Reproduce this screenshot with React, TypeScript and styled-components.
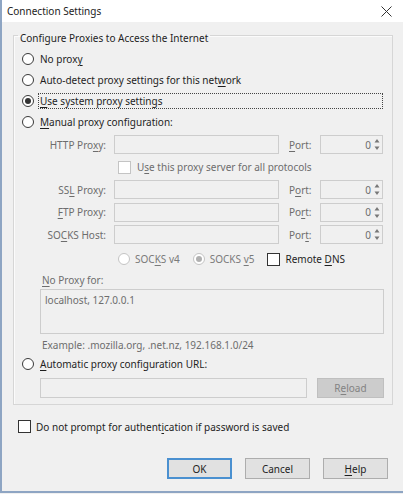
import styled, { createGlobalStyle } from 'styled-components';

const GlobalStyle = createGlobalStyle`
  html, body { margin: 0; padding: 0; background: #f0f0f0; }
  body {
    font-family: "Noto Sans", "Open Sans", sans-serif;
    font-size: 10px;
    color: #1e1e1e;
    white-space: nowrap;
  }
  u { text-decoration-thickness: 1px; text-underline-offset: 2px; }
`;

const Window = styled.div`
  width: 403px;
  height: 493px;
  box-sizing: border-box;
  display: flex;
  flex-direction: column;
  background: #f0f0f0;
  border-left: 2px solid #8ea5c3;
  border-bottom: 2px solid #8ea5c3;
`;

const TitleBar = styled.div`
  height: 22px;
  flex: none;
  background: #fff;
  display: flex;
  align-items: center;
  justify-content: space-between;
  padding: 0 11px 0 5px;
`;

const Title = styled.span`
  font-size: 10px;
  color: #222;
`;

const Body = styled.div`
  flex: 1;
  display: flex;
  flex-direction: column;
  padding: 4px 0 0 11px;
`;

const Group = styled.fieldset`
  margin: 0;
  padding: 0;
  width: 380px;
  box-sizing: border-box;
  min-width: 0;
  border: 1px solid #d6d6d6;
  box-shadow: inset 1px 1px 0 #fbfbfb;
`;

const Legend = styled.legend`
  margin-left: 4px;
  padding: 6px 2px 0;
  line-height: 13px;
`;

const GroupInner = styled.div`
  display: flex;
  flex-direction: column;
  padding: 3px 8px 6px 8px;
`;

const Option = styled.label`
  display: flex;
  align-items: center;
  height: 21px;
  gap: 4px;
`;

const OptionText = styled.span<{ $focused?: boolean }>`
  flex: ${p => (p.$focused ? 1 : 'none')};
  padding: 0 1px;
  line-height: 14px;
  border: 1px dotted ${p => (p.$focused ? '#444' : 'transparent')};
  margin-right: ${p => (p.$focused ? '1px' : '0')};
`;

const Radio = styled.span<{ $checked?: boolean; $disabled?: boolean }>`
  width: 12px;
  height: 12px;
  box-sizing: border-box;
  border-radius: 50%;
  border: 1px solid ${p => (p.$disabled ? '#c4c4c4' : '#3a3a3a')};
  background: #fff;
  flex: none;
  display: flex;
  align-items: center;
  justify-content: center;
  &::after {
    content: '';
    width: 6px;
    height: 6px;
    border-radius: 50%;
    background: ${p => (p.$disabled ? '#b0b0b0' : '#333')};
    display: ${p => (p.$checked ? 'block' : 'none')};
  }
`;

const Check = styled.span<{ $disabled?: boolean }>`
  width: 13px;
  height: 13px;
  box-sizing: border-box;
  border: 1px solid ${p => (p.$disabled ? '#c4c4c4' : '#333')};
  background: #fff;
  flex: none;
`;

const ProxyGrid = styled.div`
  margin-left: 18px;
  margin-top: 3px;
  display: grid;
  grid-template-columns: 74px 165px 41px 63px;
  grid-auto-rows: 19px;
  row-gap: 3.5px;
  align-items: center;
  color: #6d6d6d;
`;

const FieldLabel = styled.span`
  justify-self: end;
  padding-right: 8px;
`;

const PortLabel = styled.span`
  padding-left: 10px;
`;

const TextBox = styled.div<{ $height?: number }>`
  height: ${p => p.$height ?? 19}px;
  box-sizing: border-box;
  border: 1px solid #cdcdcd;
  background: #f0f0f0;
  color: #6d6d6d;
  padding: 3px 4px;
  line-height: 14px;
`;

const Spinner = styled.div`
  height: 19px;
  box-sizing: border-box;
  border: 1px solid #cdcdcd;
  display: flex;
  align-items: center;
  justify-content: flex-end;
  gap: 3px;
  padding-right: 2px;
  color: #6d6d6d;
`;

const SpanRow = styled.div`
  grid-column: 2 / span 3;
  display: flex;
  align-items: center;
  padding-left: 4px;
  gap: 6px;
`;

const Socks = styled.div`
  grid-column: 2 / span 3;
  display: flex;
  align-items: center;
  padding-left: 4px;
  margin-top: 4px;
`;

const SocksItem = styled.span<{ $dark?: boolean }>`
  display: flex;
  align-items: center;
  gap: 5px;
  margin-right: 13px;
  color: ${p => (p.$dark ? '#1e1e1e' : '#7a7a7a')};
`;

const Indented = styled.div`
  margin-left: 18px;
  display: flex;
  flex-direction: column;
  color: #6d6d6d;
`;

const SmallLabel = styled.span<{ $top: number }>`
  padding-left: 2px;
  margin-top: ${p => p.$top}px;
  line-height: 17px;
`;

const UrlRow = styled.div`
  margin: 3px 0 0 18px;
  display: flex;
  gap: 10px;
`;

const ReloadButton = styled.div`
  width: 67px;
  height: 20px;
  box-sizing: border-box;
  border: 1px solid #bfbfbf;
  background: #cccccc;
  color: #838383;
  display: flex;
  align-items: center;
  justify-content: center;
`;

const PromptRow = styled.label`
  display: flex;
  align-items: center;
  gap: 5px;
  margin: 14px 0 0 5px;
  height: 16px;
`;

const Buttons = styled.div`
  margin-top: auto;
  margin-bottom: 12px;
  padding-right: 15px;
  display: flex;
  justify-content: flex-end;
  gap: 13px;
`;

const Button = styled.div<{ $primary?: boolean }>`
  width: 65px;
  height: 21px;
  box-sizing: border-box;
  border: ${p => (p.$primary ? '2px solid #4a90d0' : '1px solid #adadad')};
  background: #e1e1e1;
  display: flex;
  align-items: center;
  justify-content: center;
  color: #1e1e1e;
`;

function SpinArrows() {
  return (
    <svg width="6" height="13" viewBox="0 0 6 13">
      <path d="M3 1 L5.5 4.5 H0.5 Z" fill="#777" />
      <path d="M3 12 L5.5 8.5 H0.5 Z" fill="#777" />
    </svg>
  );
}

function CloseIcon() {
  return (
    <svg width="11" height="11" viewBox="0 0 11 11">
      <path d="M0.5 0.5 L10.5 10.5 M10.5 0.5 L0.5 10.5" stroke="#333" strokeWidth="1" />
    </svg>
  );
}

function ProxyRow({ label, port }: { label: React.ReactNode; port: React.ReactNode }) {
  return (
    <>
      <FieldLabel>{label}</FieldLabel>
      <TextBox />
      <PortLabel>{port}</PortLabel>
      <Spinner>
        <span>0</span>
        <SpinArrows />
      </Spinner>
    </>
  );
}

export default function App() {
  return (
    <>
      <GlobalStyle />
      <Window>
        <TitleBar>
          <Title>Connection Settings</Title>
          <CloseIcon />
        </TitleBar>
        <Body>
          <Group>
            <Legend>Configure Proxies to Access the Internet</Legend>
            <GroupInner>
              <Option>
                <Radio />
                <OptionText>No prox<u>y</u></OptionText>
              </Option>
              <Option>
                <Radio />
                <OptionText>Auto-detect proxy settings for this net<u>w</u>ork</OptionText>
              </Option>
              <Option>
                <Radio $checked />
                <OptionText $focused><u>U</u>se system proxy settings</OptionText>
              </Option>
              <Option>
                <Radio />
                <OptionText><u>M</u>anual proxy configuration:</OptionText>
              </Option>

              <ProxyGrid>
                <ProxyRow label={<>HTTP Pro<u>x</u>y:</>} port={<><u>P</u>ort:</>} />
                <SpanRow>
                  <Check $disabled />
                  <span>U<u>s</u>e this proxy server for all protocols</span>
                </SpanRow>
                <ProxyRow label={<>SS<u>L</u> Proxy:</>} port={<>P<u>o</u>rt:</>} />
                <ProxyRow label={<><u>F</u>TP Proxy:</>} port={<>Po<u>r</u>t:</>} />
                <ProxyRow label={<>SO<u>C</u>KS Host:</>} port={<>Por<u>t</u>:</>} />
                <Socks>
                  <SocksItem>
                    <Radio $disabled />
                    <span>SOC<u>K</u>S v4</span>
                  </SocksItem>
                  <SocksItem>
                    <Radio $disabled $checked />
                    <span>SOCKS <u>v</u>5</span>
                  </SocksItem>
                  <SocksItem $dark>
                    <Check />
                    <span>Remote <u>D</u>NS</span>
                  </SocksItem>
                </Socks>
              </ProxyGrid>

              <Indented>
                <SmallLabel $top={5}><u>N</u>o Proxy for:</SmallLabel>
                <TextBox $height={45}>localhost, 127.0.0.1</TextBox>
                <SmallLabel $top={3}>Example: .mozilla.org, .net.nz, 192.168.1.0/24</SmallLabel>
              </Indented>

              <Option>
                <Radio />
                <OptionText><u>A</u>utomatic proxy configuration URL:</OptionText>
              </Option>
              <UrlRow>
                <TextBox style={{ flex: 1 }} $height={20} />
                <ReloadButton>R<u>e</u>load</ReloadButton>
              </UrlRow>
            </GroupInner>
          </Group>

          <PromptRow>
            <Check />
            <span>Do not prompt for authent<u>i</u>cation if password is saved</span>
          </PromptRow>

          <Buttons>
            <Button $primary>OK</Button>
            <Button>Cancel</Button>
            <Button><u>H</u>elp</Button>
          </Buttons>
        </Body>
      </Window>
    </>
  );
}
